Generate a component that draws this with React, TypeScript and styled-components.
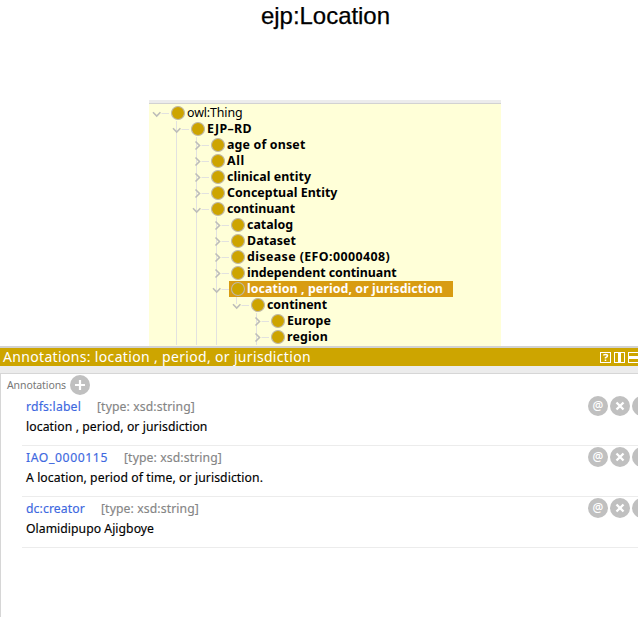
import React, { useLayoutEffect, useRef, useState } from "react";
import styled, { createGlobalStyle } from "styled-components";

const GlobalStyle = createGlobalStyle`
  * { box-sizing: border-box; }
  body { margin: 0; background: #fff; overflow: hidden; }
`;

const Page = styled.main`
  width: 638px;
  height: 618px;
  display: flex;
  flex-direction: column;
  overflow: hidden;
  background: #fff;
  font-family: "Noto Sans", "Open Sans", sans-serif;
`;

const Title = styled.h1`
  margin: 0;
  height: 100px;
  flex: none;
  padding: 2px 0 0 261px;
  font: 400 24px/28px "Liberation Sans", Arial, sans-serif;
  color: #000;
  -webkit-text-stroke: 0.25px #000;
`;

const TreePanel = styled.section`
  width: 352px;
  height: 246px;
  flex: none;
  margin-left: 149px;
  border-top: 3px solid #ececec;
  background: #ffffd8;
  overflow: hidden;
`;

const TreeList = styled.div`
  border-top: 1px solid #d2d2d2;
  padding-top: 1px;
`;

const TreeRow = styled.div`
  display: flex;
  height: 16px;
`;

const Guides = styled.svg`
  flex: none;
  display: block;
`;

const NodeLabel = styled.div<{ $selected?: boolean; $bold?: boolean }>`
  display: flex;
  height: 16px;
  width: ${(p) => (p.$selected ? "224px" : "auto")};
  padding-left: 1px;
  gap: 1px;
  background: ${(p) => (p.$selected ? "#d89c12" : "transparent")};
  color: ${(p) => (p.$selected ? "#fff" : "#000")};
  font-size: 12.4px;
  font-weight: ${(p) => (p.$bold ? 700 : 400)};
  line-height: 15px;
`;

const Fitted = styled.span`
  display: inline-block;
  white-space: pre;
  flex: none;
`;

/* Spreads the letters so that the text takes the given width. */
function FitText({ text, width }: { text: string; width: number }) {
  const ref = useRef<HTMLSpanElement>(null);
  const [spacing, setSpacing] = useState(0);
  useLayoutEffect(() => {
    if (ref.current) {
      const natural = ref.current.getBoundingClientRect().width;
      setSpacing((width - natural) / text.length);
    }
  }, [text, width]);
  return (
    <Fitted ref={ref} style={{ letterSpacing: spacing }}>
      {text}
    </Fitted>
  );
}

type TreeNode = {
  label: string;
  level: number;
  width: number;
  open?: boolean;
  last?: boolean;
  selected?: boolean;
};

const nodes: TreeNode[] = [
  { label: "owl:Thing", level: 0, width: 55.5, open: true },
  { label: "EJP–RD", level: 1, width: 45, open: true },
  { label: "age of onset", level: 2, width: 78.5 },
  { label: "All", level: 2, width: 18 },
  { label: "clinical entity", level: 2, width: 84 },
  { label: "Conceptual Entity", level: 2, width: 110.5 },
  { label: "continuant", level: 2, width: 68, open: true },
  { label: "catalog", level: 3, width: 46 },
  { label: "Dataset", level: 3, width: 49 },
  { label: "disease (EFO:0000408)", level: 3, width: 143 },
  { label: "independent continuant", level: 3, width: 149.5 },
  { label: "location , period, or jurisdiction", level: 3, width: 196, open: true, selected: true },
  { label: "continent", level: 4, width: 60, open: true, last: true },
  { label: "Europe", level: 5, width: 44 },
  { label: "region", level: 5, width: 41 },
];

/* Level whose guide line has already ended above its descendants. */
const CLOSED_LEVEL = 4;

function RowGuides({ level, open, last }: TreeNode) {
  const x = 7.5 + level * 20;
  const levels = Array.from({ length: level }, (_, i) => i + 1);
  return (
    <Guides width={20 + level * 20} height={16}>
      {levels
        .filter((k) => k === level || k !== CLOSED_LEVEL)
        .map((k) => (
          <path key={k} d={`M${7.5 + k * 20} 0V${k === level && last ? 7 : 16}`} stroke="#e2e2e0" />
        ))}
      <path d={`M${x + 5} 8.5h7.5`} stroke="#e2e2e0" />
      <path
        d={open ? `M${x - 3.5} 7.3l3.7 3.7l3.7-3.7` : `M${x - 1} 4.5l4 4l-4 4`}
        fill="none"
        stroke="#bdbdb9"
        strokeWidth={1.6}
      />
    </Guides>
  );
}

function ClassDot() {
  return (
    <Guides width={16} height={16}>
      <circle cx="8" cy="8" r="6.5" fill="#cda400" stroke="#bfb9a8" strokeWidth="1.1" />
    </Guides>
  );
}

const HeaderBar = styled.header`
  height: 20px;
  flex: none;
  display: flex;
  align-items: center;
  justify-content: space-between;
  border-top: 2px solid #d2d2d2;
  padding-left: 3px;
  background: #cda500;
  color: #fff;
  font-size: 14px;
  line-height: 18px;
`;

const Annotations = styled.section`
  height: 251px;
  flex: none;
  border-top: 7px solid #ececec;
`;

const AnnotationsBody = styled.div`
  height: 244px;
  border-top: 1px solid #d6d6d6;
  border-left: 1px solid #d6d6d6;
`;

const SectionHead = styled.div`
  height: 22px;
  padding: 1px 0 0 6px;
  display: flex;
  align-items: flex-start;
  gap: 4px;
  color: #777;
  font-size: 10.5px;
  line-height: 21px;
`;

const Entry = styled.article`
  height: 51px;
  margin-left: 21px;
  padding: 1px 0 0 4px;
  border-bottom: 1px solid #ececec;
  display: flex;
  justify-content: space-between;
  &:first-of-type { height: 50px; padding-top: 0; }
`;

const EntryText = styled.div`
  padding-top: 1px;
  font-size: 12.2px;
  line-height: 20px;
  color: #000;
  -webkit-text-stroke: 0.15px currentColor;
`;

const EntryMeta = styled.div`
  display: flex;
  gap: 16px;
  color: #858585;
`;

const Property = styled.span`
  color: #3d68e0;
`;

const Actions = styled.div`
  width: 50px;
  display: flex;
  gap: 2px;
  overflow: hidden;
`;

function HeaderIcons() {
  return (
    <Guides width={38} height={18} fill="none" stroke="#fff">
      <rect x="0.5" y="4.5" width="10" height="10" />
      <path d="M3.5 7.5q0-1 2-1t2 1.3q0 1-2 1.8v.9M5.5 11.5v1.5" strokeWidth="1.5" />
      <rect x="14.5" y="4.5" width="10" height="10" />
      <path d="M19.5 4v11" strokeWidth="3" />
      <rect x="28.5" y="4.5" width="10" height="10" />
      <path d="M28 9.5h11" strokeWidth="3" />
    </Guides>
  );
}

const Glyph = styled.text`
  font: 500 12px "Noto Sans", sans-serif;
  fill: #fff;
`;

function RoundButton({ kind }: { kind: "add" | "at" | "remove" | "edit" }) {
  return (
    <Guides width={20} height={20}>
      <circle cx="10" cy="10" r="10" fill="#c0c0c0" />
      {kind === "add" && <path d="M10 5v10M5 10h10" stroke="#fff" strokeWidth="2.2" />}
      {kind === "remove" && (
        <path d="M6.5 6.5l7 7M13.5 6.5l-7 7" stroke="#fff" strokeWidth="2.3" />
      )}
      {kind === "at" && (
        <Glyph x="10" y="14" textAnchor="middle">
          @
        </Glyph>
      )}
    </Guides>
  );
}

const entries = [
  { property: "rdfs:label", pw: 55, value: "location , period, or jurisdiction", vw: 181.5 },
  { property: "IAO_0000115", pw: 82, value: "A location, period of time, or jurisdiction.", vw: 237 },
  { property: "dc:creator", pw: 59, value: "Olamidipupo Ajigboye", vw: 128 },
];

export default function App() {
  return (
    <>
      <GlobalStyle />
      <Page>
        <Title>
          <FitText text="ejp:Location" width={129} />
        </Title>
        <TreePanel>
          <TreeList>
            {nodes.map((node) => (
              <TreeRow key={node.label}>
                <RowGuides {...node} />
                <NodeLabel $selected={node.selected} $bold={node.level > 0}>
                  <ClassDot />
                  <FitText text={node.label} width={node.width} />
                </NodeLabel>
              </TreeRow>
            ))}
          </TreeList>
        </TreePanel>
        <HeaderBar>
          <FitText text="Annotations: location , period, or jurisdiction" width={308} />
          <HeaderIcons />
        </HeaderBar>
        <Annotations>
          <AnnotationsBody>
            <SectionHead>
              <FitText text="Annotations" width={59} />
              <RoundButton kind="add" />
            </SectionHead>
            {entries.map((entry) => (
              <Entry key={entry.property}>
                <EntryText>
                  <EntryMeta>
                    <Property>
                      <FitText text={entry.property} width={entry.pw} />
                    </Property>
                    <FitText text="[type: xsd:string]" width={98} />
                  </EntryMeta>
                  <FitText text={entry.value} width={entry.vw} />
                </EntryText>
                <Actions>
                  <RoundButton kind="at" />
                  <RoundButton kind="remove" />
                  <RoundButton kind="edit" />
                </Actions>
              </Entry>
            ))}
          </AnnotationsBody>
        </Annotations>
      </Page>
    </>
  );
}
